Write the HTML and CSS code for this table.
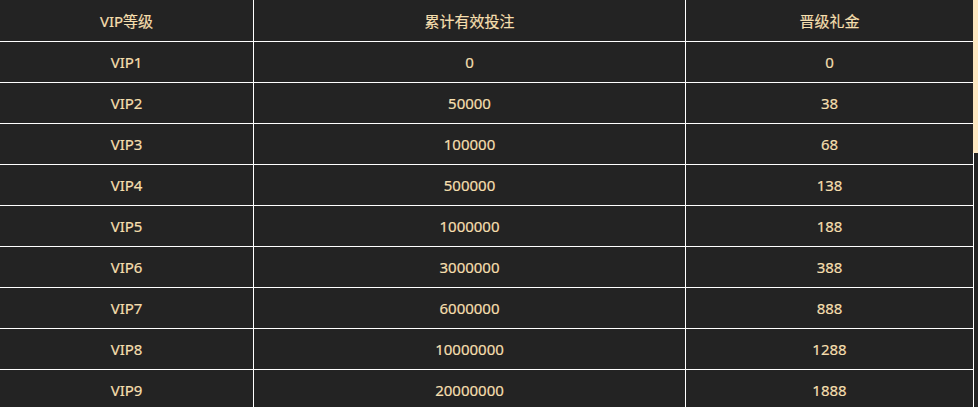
FILE: index.html
```html
<!DOCTYPE html>
<html>
<head>
 <meta charset="UTF-8">
 <title>VIP等级</title>
 <link rel="stylesheet" href="styles.css">
</head>
<body>
<table class="vip">
  <thead>
    <tr><th class="c1">VIP等级</th><th class="c2">累计有效投注</th><th class="c3">晋级礼金</th></tr>
  </thead>
  <tbody>
    <tr><td>VIP1</td><td>0</td><td>0</td></tr>
    <tr><td>VIP2</td><td>50000</td><td>38</td></tr>
    <tr><td>VIP3</td><td>100000</td><td>68</td></tr>
    <tr><td>VIP4</td><td>500000</td><td>138</td></tr>
    <tr><td>VIP5</td><td>1000000</td><td>188</td></tr>
    <tr><td>VIP6</td><td>3000000</td><td>388</td></tr>
    <tr><td>VIP7</td><td>6000000</td><td>888</td></tr>
    <tr><td>VIP8</td><td>10000000</td><td>1288</td></tr>
    <tr><td>VIP9</td><td>20000000</td><td>1888</td></tr>
  </tbody>
</table>
<div class="thumb"></div>
</body>
</html>
```

FILE: styles.css
```css
html, body { margin: 0; padding: 0; height: 100%; overflow: hidden; }
body { background: #232323; color: #f5dfae;
  font-family: "Noto Sans", "Noto Sans CJK SC", sans-serif; font-size: 15px; }
.vip { border-collapse: separate; border-spacing: 0; table-layout: fixed;
  width: 974px; }
.vip th, .vip td { box-sizing: border-box; padding: 0; text-align: center;
  font-weight: normal; border: 1px solid #fff; border-width: 0 1px 1px 0;
  -webkit-text-stroke: 0.2px #f5dfae; }
.vip th { height: 42px; line-height: 40px; }
.vip td { height: 41px; line-height: 40px; }
.c1 { width: 254px; }
.c2 { width: 432px; }
.c3 { width: 288px; }
/* scrollbar thumb drawn over the table edge */
.thumb { position: fixed; top: 0; left: 973px; width: 5px; height: 153px;
  background: #fde8c2; }
```
